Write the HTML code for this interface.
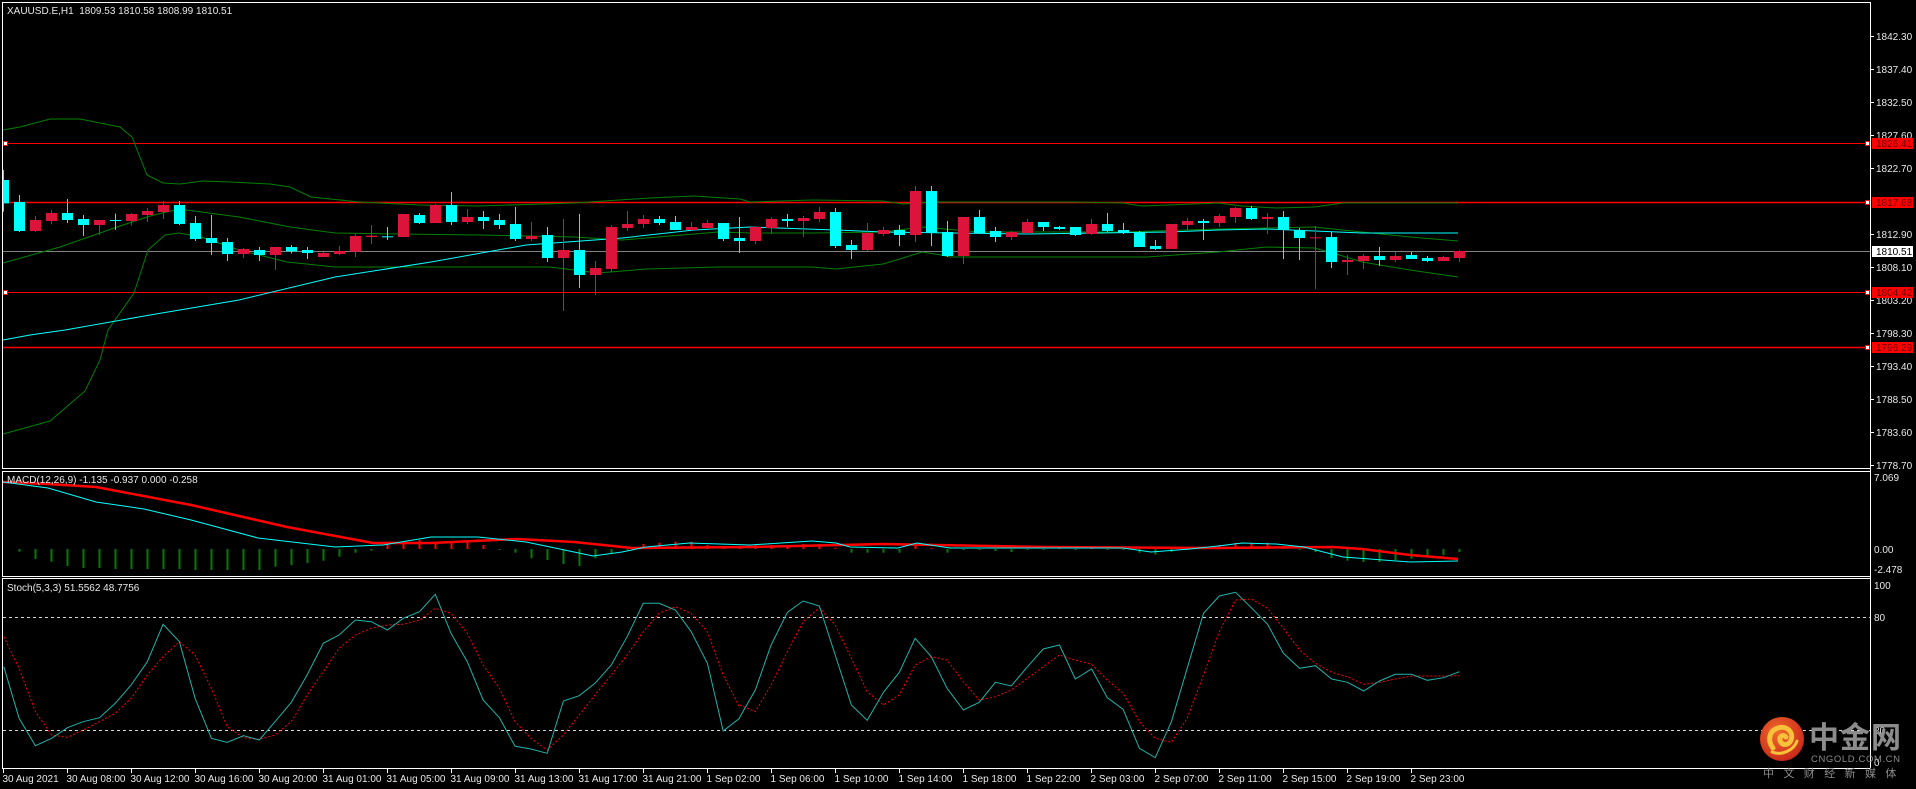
<!DOCTYPE html>
<html><head><meta charset="utf-8"><style>
html,body{margin:0;padding:0;background:#000;width:1916px;height:789px;overflow:hidden}
svg{display:block}
text{font-family:"Liberation Sans",sans-serif;font-size:10px;fill:#e8e8e8}
</style></head><body>
<svg id="s" width="1916" height="789" viewBox="0 0 1916 789" xmlns="http://www.w3.org/2000/svg">
<rect width="1916" height="789" fill="#000"/>
<g id="g"></g>
<!-- logo -->
<defs><radialGradient id="lg" cx="0.4" cy="0.35" r="0.7"><stop offset="0" stop-color="#f06a2a"/><stop offset="1" stop-color="#c8261a"/></radialGradient></defs>
<circle cx="1782" cy="739" r="22" fill="url(#lg)"/>
<path d="M1773 748 C1768 742 1768 731 1778 728 C1787 725 1794 733 1791 740 C1789 746 1781 746 1780 740 C1779 736 1784 734 1786 737" fill="none" stroke="#f7c23a" stroke-width="5" stroke-linecap="round"/>
<path d="M1772 752 C1782 756 1794 750 1797 741" fill="none" stroke="#f7c23a" stroke-width="3" stroke-linecap="round"/>
<text x="1809" y="748" style="font-family:'Noto Sans CJK SC',sans-serif;font-size:30px;font-weight:bold;fill:#8c8c8c;letter-spacing:1px">中金网</text>
<text x="1811" y="762" style="font-size:9.5px;fill:#8c8c8c;letter-spacing:0.6px">CNGOLD.COM.CN</text>
<text x="1763" y="777" style="font-family:'Noto Sans CJK SC',sans-serif;font-size:11px;fill:#8c8c8c;letter-spacing:9.4px">中文财经新媒体</text>
</svg>
<script>
var g=document.getElementById('g'),h='';
function L(x1,y1,x2,y2,c,w,extra){h+='<line x1="'+x1+'" y1="'+y1+'" x2="'+x2+'" y2="'+y2+'" stroke="'+c+'" stroke-width="'+(w||1)+'" '+(extra||'')+'/>';}
function R(x,y,w,hh,c){h+='<rect x="'+x+'" y="'+y+'" width="'+w+'" height="'+hh+'" fill="'+c+'"/>';}
function T(x,y,t,st){h+='<text x="'+x+'" y="'+y+'" '+(st||'')+'>'+t+'</text>';}
function P(pts,c,w,extra){h+='<polyline fill="none" stroke="'+c+'" stroke-width="'+(w||1)+'" '+(extra||'')+' points="'+pts.map(function(p){return p[0].toFixed(1)+','+p[1].toFixed(1)}).join(' ')+'"/>';}
// borders
var W='#ffffff';
L(2,2.5,1870,2.5,W);L(2.5,2,2.5,468,W);L(2,468.5,1870,468.5,W);
L(2,471.5,1870,471.5,W);L(2.5,471,2.5,576,W);L(2,576.5,1870,576.5,W);
L(2,578.5,1870,578.5,W);L(2.5,578,2.5,768,W);L(2,768.5,1870,768.5,W);
L(1870.5,2,1870.5,768,W);
// horizontal levels
L(3,143.5,1870,143.5,'#ff0000');L(3,202.5,1870,202.5,'#ff0000',1.5);
L(3,251.5,1870,251.5,'#808080');L(3,292.5,1870,292.5,'#ff0000');L(3,347.5,1870,347.5,'#ff0000',1.5);
// bands (actual coords)
function clipL(a){return a;}
P([[3,130],[20,127],[50,119],[80,119],[90,121],[120,127],[132,137],[147,175],[163,183],[180,184],[203,181],[230,182],[270,184],[290,187],[311,197],[340,200],[359,202],[420,205],[478,206],[574,203],[650,198],[694,196],[740,199],[750,202],[812,200],[883,201],[903,204],[931,202],[1075,202],[1123,203],[1142,206],[1194,204],[1218,203],[1242,206],[1276,208],[1314,207],[1343,203],[1458,203]],'#008000');
P([[3,263],[60,247],[120,226],[150,216],[179,209],[239,217],[290,227],[335,233],[400,234],[478,235],[574,237],[622,240],[670,236],[718,232],[750,233],[812,233],[883,232],[922,227],[979,232],[1123,232],[1218,229],[1314,227],[1362,232],[1410,237],[1458,241]],'#008000');
P([[3,434],[50,421],[85,391],[100,360],[108,330],[134,293],[148,250],[165,235],[179,233],[201,237],[239,250],[287,262],[335,267],[478,267],[550,267],[598,273],[646,269],[718,267],[812,267],[836,269],[883,264],[903,258],[922,252],[941,255],[950,257],[1027,257],[1147,257],[1218,252],[1266,247],[1314,248],[1333,253],[1362,262],[1410,270],[1458,277]],'#008000');
P([[3,340],[30,335],[65,330],[150,315],[239,300],[335,277],[431,262],[526,245],[622,238],[694,230],[750,227],[778,228],[836,230],[883,232],[1027,234],[1170,232],[1218,230],[1266,229],[1362,233],[1458,233]],'#00ffff');
// candles: color, bodyTop, bodyBot, wickTop, wickBot (zoom units, y=170+z/3)
var C=[['c',30,100,0,125],['c',96,183,75,186],['r',150,183,138,186],['r',129,153,120,163],['c',129,150,87,159],['c',147,165,135,198],['r',150,165,150,195],['x',150,150,131,180],['r',132,153,129,167],['r',123,135,114,156],
['r',105,126,93,147],['c',105,162,93,165],['c',159,207,138,213],['c',204,219,135,255],['c',216,252,204,273],['r',237,252,234,264],['c',240,255,231,273],['r',231,255,231,300],['c',231,244,225,250],['c',240,249,231,267],
['r',249,261,246,261],['r',243,252,228,255],['r',198,245,192,261],['r',197,201,165,222],['x',199,199,171,210],['r',132,201,132,201],['c',135,159,129,162],['r',105,159,102,159],['c',105,156,66,165],['r',141,156,117,162],
['c',141,153,123,177],['c',150,165,132,177],['c',162,207,111,213],['r',198,207,156,213],['c',195,264,171,276],['r',240,264,147,423],['c',240,315,132,354],['r',294,315,273,375],['r',171,297,165,306],['r',162,174,123,183],
['r',147,162,135,174],['c',147,159,138,165],['c',156,180,138,180],['r',171,180,156,183],['r',159,174,150,177],['c',159,207,159,213],['c',204,213,141,249],['r',171,213,168,222],['r',147,174,141,192],['c',147,153,132,171],
['r',144,153,138,201],['r',126,147,111,156],['c',126,228,114,234],['c',225,240,210,267],['r',189,240,159,243],['r',180,192,171,198],['c',180,195,165,228],['r',63,195,48,216],['c',63,189,48,228],['c',186,258,153,261],
['r',141,258,141,282],['c',141,189,120,192],['c',183,201,171,216],['r',186,201,183,210],['r',156,189,147,195],['c',156,171,156,183],['c',171,177,168,180],['c',171,195,171,198],['r',162,192,147,195],['c',162,183,129,186],
['c',180,189,159,192],['c',186,231,183,231],['c',228,237,210,240],['r',162,237,162,237],['r',153,165,144,180],['c',153,159,147,210],['r',138,159,132,171],['r',114,141,111,159],['c',114,147,108,150],['r',141,147,129,192],
['c',141,180,123,267],['c',180,204,174,270],['xr',202,202,168,357],['c',201,276,186,294],['r',270,276,255,315],['r',258,273,252,297],['c',258,270,231,288],['r',258,270,246,276],['c',255,267,246,267],['c',264,273,258,276],
['r',261,273,258,273],['r',243,264,240,276]];
function Y(z){return 170+z/3;}
C.forEach(function(c,i){var x=Math.round(3.1+16*i);var col=(c[0]=='c'||c[0]=='x')?'#00ffff':'#dc143c';
 var x0=Math.max(3,x-5);
 L(x+0.5,Y(c[3]),x+0.5,Y(c[4]),col);
 var t=Y(c[1]),b=Y(c[2]);if(b-t<1){L(x0,t+0.5,x+6,t+0.5,col);}else R(x0,t,x+6-x0,b-t,col);
});
// MACD histogram
var H=[0,2.7,10,12.7,17,19,19,20,20,20,20,20,21,21,21,21,21,17.7,16,14,11.7,7.7,3.7,1.7,-5,-5,-9,-7.3,-7.3,-9,-4,1,3.7,9.3,11,15,17,9.3,4.3,1,-5,-6.3,-7.3,-7.3,-4,-3,-3,-4,-4,-4,-5,-5,-1.3,3.7,3.7,3.7,3.7,-4,-1,3.7,1,1,2,3,1,1,-1,1,-2.3,1,1,3.7,5.7,3,1,0.5,-4,-6.3,-6.3,-6.3,-3,1,3,9,11.7,13,13,11,9.7,8.3,6.3,3];
H.forEach(function(v,i){if(!v)return;var x=Math.round(3.1+16*i)+0.5;if(v>0)L(x,549,x,549+v,'#008000',2);else L(x,549,x,549+v,'#ff0000',2);});
P([[3,482],[48,484],[96,487],[191,505],[287,527],[373,543],[431,543],[517,539],[574,542],[632,548],[750,547],[883,544],[1046,547],[1218,548],[1333,547],[1362,549],[1410,555],[1458,559]],'#ff0000',2.5);
P([[3,482],[48,488],[96,502],[144,509],[191,520],[258,538],[335,547],[383,545],[431,537],[478,537],[526,542],[555,548],[593,556],[622,552],[646,547],[689,543],[750,545],[812,541],[836,543],[850,547],[898,548],[917,543],[950,548],[1123,548],[1151,552],[1190,549],[1218,546],[1242,543],[1276,544],[1304,547],[1343,557],[1410,562],[1458,561]],'#00ffff');
// Stoch
L(3,617.5,1870,617.5,'#d8d8d8',1,'stroke-dasharray="3,3"');L(3,730.5,1870,730.5,'#d8d8d8',1,'stroke-dasharray="3,3"');
function conv(a,off){return a.map(function(p){return [off+p[0]/2.0907,575+p[1]/3];});}
var s1=conv([[8,275],[40,430],[74,512],[108,490],[141,458],[174,440],[208,428],[241,385],[274,330],[308,260],[341,148],[375,200],[408,370],[442,490],[475,502],[509,482],[542,495],[575,440],[609,382],[642,300],[676,205],[709,180],[743,135],[776,140],[810,165],[843,130],[877,110],[910,58],[943,175],[977,260],[1010,375],[1044,428],[1077,514],[1110,522],[1144,535],[1178,378],[1211,362],[1244,325],[1278,270],[1311,185],[1345,85],[1378,85],[1412,105],[1445,170],[1479,265],[1512,468],[1546,430]],0).concat(conv([[0,425],[32,345],[65,210],[99,112],[132,78],[166,93],[199,240],[233,390],[266,436],[300,352],[333,292],[366,190],[400,245],[433,340],[467,405],[500,382],[534,322],[567,333],[601,275],[634,222],[668,210],[701,312],[735,282],[768,368],[801,403],[835,520],[868,548],[902,440],[935,280],[969,115],[1002,63],[1036,52],[1069,98],[1103,148],[1136,235],[1170,280],[1203,272],[1237,312],[1270,322],[1304,348],[1337,318],[1370,298],[1404,298],[1437,316],[1471,308],[1504,290]],740));
var s2=conv([[8,185],[40,280],[74,410],[108,480],[141,487],[174,465],[208,440],[241,415],[274,370],[308,300],[341,245],[375,200],[408,240],[442,340],[475,455],[509,488],[542,493],[575,480],[609,440],[642,360],[676,290],[709,220],[743,180],[776,160],[810,150],[843,148],[877,135],[910,100],[943,115],[977,175],[1010,270],[1044,340],[1077,440],[1110,490],[1144,525],[1178,480],[1211,420],[1244,360],[1278,300],[1311,240],[1345,170],[1378,115],[1412,95],[1445,115],[1479,170],[1512,300],[1546,395]],0).concat(conv([[0,390],[32,410],[65,330],[99,230],[132,140],[166,98],[199,150],[233,250],[266,350],[300,390],[333,360],[366,270],[400,245],[433,255],[467,320],[500,375],[534,365],[567,345],[601,310],[634,275],[668,240],[701,255],[735,268],[768,315],[801,355],[835,440],[868,490],[902,502],[935,430],[969,300],[1002,170],[1036,75],[1069,72],[1103,100],[1136,160],[1170,225],[1203,265],[1237,292],[1270,305],[1304,328],[1337,322],[1370,312],[1404,303],[1437,303],[1471,303],[1504,302]],740));
P(s2,'#ff0000',1,'stroke-dasharray="2,2"');
P(s1,'#20b2aa',1);
// squares on levels
[[143.5],[292.5]].forEach(function(a){R(3,a[0]-2.5,5,5,'#fff');h+='<rect x="3.5" y="'+(a[0]-2)+'" width="4" height="4" fill="#fff" stroke="#f00"/>';});
[143.5,202.5,292.5,347.5].forEach(function(y){h+='<rect x="1865.5" y="'+(y-2)+'" width="4" height="4" fill="#fff" stroke="#f00"/>';});
// price axis
[['1842.30',36],['1837.40',69],['1832.50',102],['1827.60',135],['1822.70',168],['1812.90',234],['1808.10',267],['1803.20',300],['1798.30',333],['1793.40',366],['1788.50',399],['1783.60',432],['1778.70',465]].forEach(function(a){L(1871,a[1]+0.5,1874,a[1]+0.5,W);T(1876,a[1]+4,a[0]);});
[['1826.41',143],['1817.68',202],['1804.42',292],['1796.29',347]].forEach(function(a){R(1872,a[1]-5,41,11,'#ff0000');T(1876,a[1]+4,a[0],'style="fill:#600"');});
R(1872,246,41,11,'#ffffff');T(1876,255,'1810.51','style="fill:#000"');
T(1874,481,'7.069');T(1874,553,'0.00');T(1874,573,'-2.478');
T(1874,589,'100');T(1874,621,'80');T(1874,734,'20');T(1874,766,'0');
// titles
T(7,14,'XAUUSD.E,H1&#160;&#160;1809.53 1810.58 1808.99 1810.51');
T(7,483,'MACD(12,26,9) -1.135 -0.937 0.000 -0.258');
T(7,591,'Stoch(5,3,3) 51.5562 48.7756');
// time axis
['30 Aug 2021','30 Aug 08:00','30 Aug 12:00','30 Aug 16:00','30 Aug 20:00','31 Aug 01:00','31 Aug 05:00','31 Aug 09:00','31 Aug 13:00','31 Aug 17:00','31 Aug 21:00','1 Sep 02:00','1 Sep 06:00','1 Sep 10:00','1 Sep 14:00','1 Sep 18:00','1 Sep 22:00','2 Sep 03:00','2 Sep 07:00','2 Sep 11:00','2 Sep 15:00','2 Sep 19:00','2 Sep 23:00'].forEach(function(t,i){var x=3.5+64*i;L(x,769,x,773,W);T(x+(i?-1:-1),782,t);});
g.innerHTML=h;
</script>
</body></html>
